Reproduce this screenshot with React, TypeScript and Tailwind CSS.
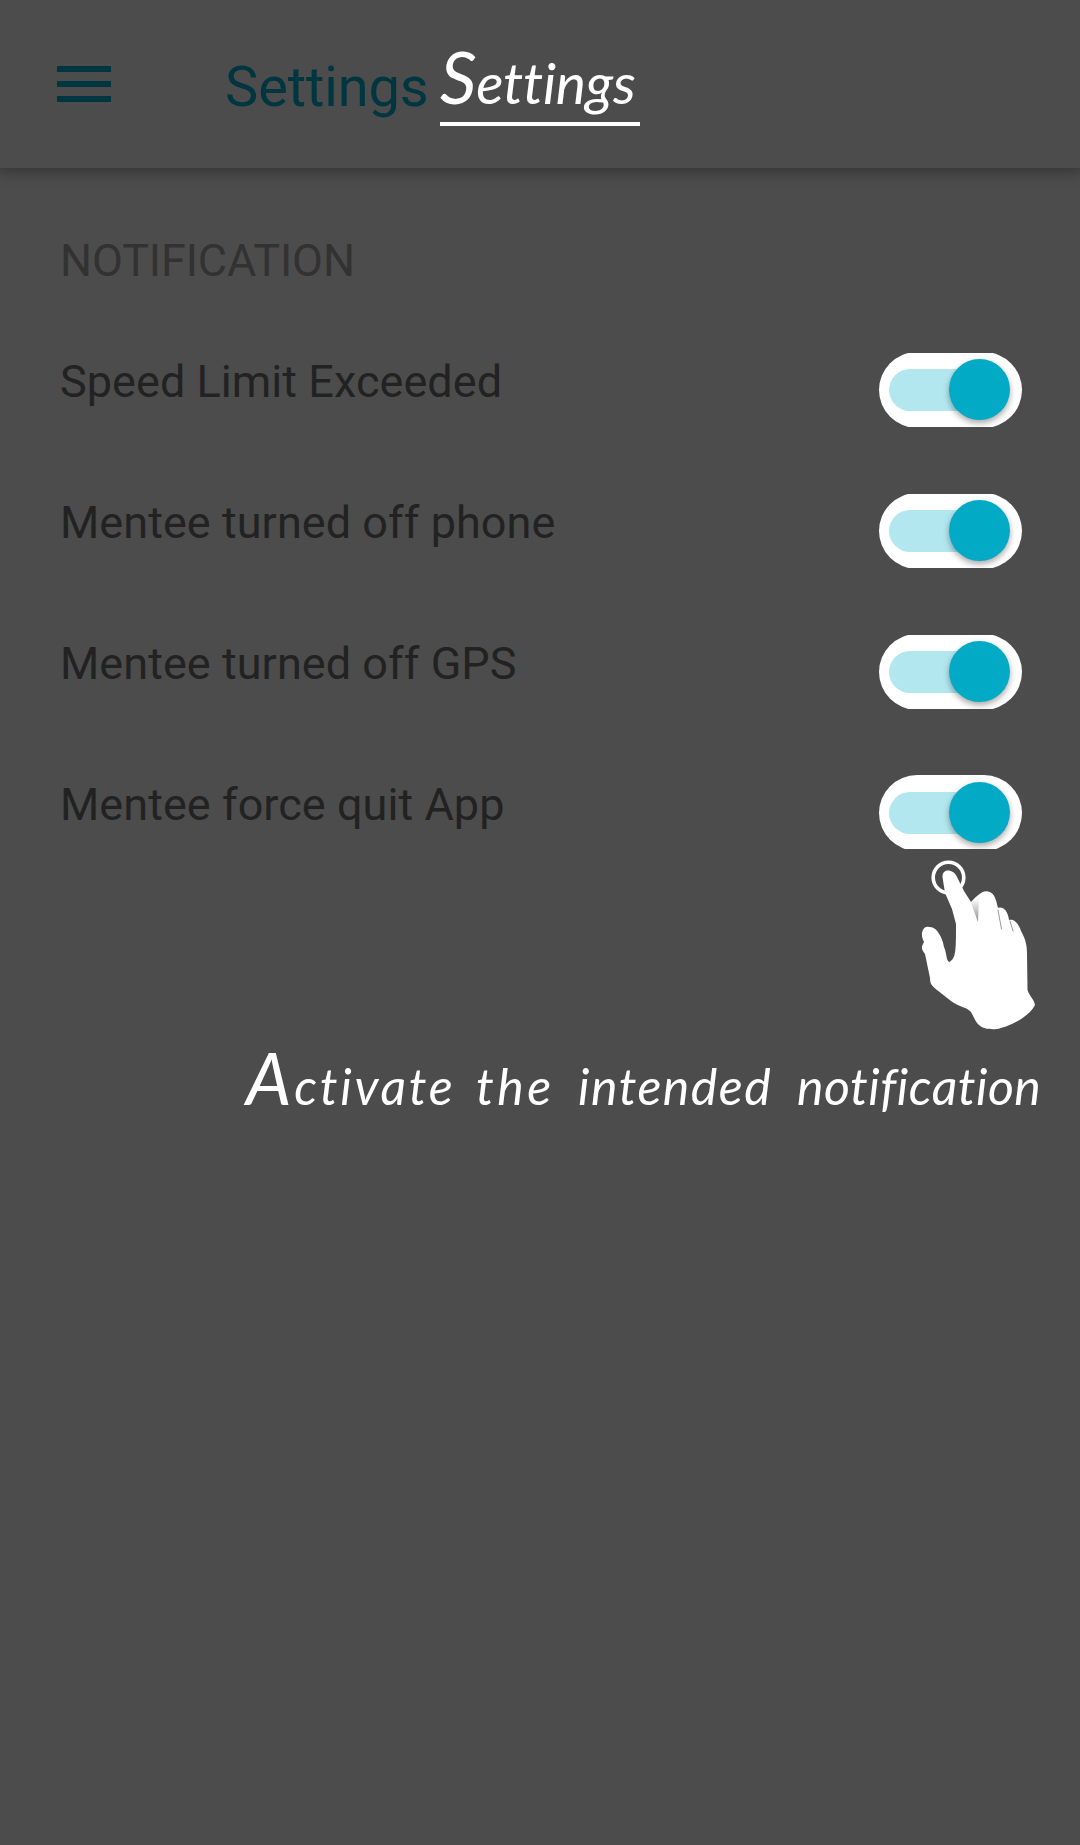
const items = [
  'Speed Limit Exceeded',
  'Mentee turned off phone',
  'Mentee turned off GPS',
  'Mentee force quit App',
];

function Toggle() {
  return (
    <span className="flex h-[76px] w-[143px] items-center rounded-[38px] bg-white pl-2.5 [clip-path:inset(1.5px_0_0.5px)] group-last:[clip-path:inset(0.5px_0_1.5px)]">
      <span className="relative block h-[42px] w-[110px] rounded-full bg-[#b3e7ef]">
        <span className="absolute -top-[9.5px] left-[60px] size-[61px] rounded-full bg-[#03aac6] shadow-[0_3px_6px_rgba(0,0,0,0.35)]" />
      </span>
    </span>
  );
}

function TapHand() {
  return (
    <svg className="h-[172px] w-[116px]" viewBox="0 0 116 172" aria-hidden="true">
      <defs>
        <linearGradient id="fold" x1="0" y1="0" x2="0" y2="1">
          <stop offset="0" stopColor="#fff" />
          <stop offset="1" stopColor="#888" />
        </linearGradient>
      </defs>
      <circle cx="28.5" cy="17.5" r="15.3" fill="none" stroke="#fff" strokeWidth="3.6" />
      <path
        fill="#fff"
        d="M22.5 17C22 8 34 9 37 17L44 31L51 42C56 37 62 30 68 31.500C75 33 76 40 78 48C83 46 88 51 89 60C95 58 99 65 101 71C106 80 107 86 107 94L107.500 130C110 137 114 139 115 145C109 158 85 168 77 169C55 171 56 158 50 151C46 147 39 147 31 141L17 130C12 126 10 124 10 118L5 94C0 88 2 86 4 82C-1 73 4 65 9 67C17 66 23 79 24 87C27 94 26 100 29 102C36 99 36 91 36 64L32 49L25 33Z"
      />
      <path fill="url(#fold)" d="M51 43Q55 39 59 39L58 62Z" />
      <path d="M78 50L81.500 69M90 61L93 71" fill="none" stroke="#999" strokeWidth="1" strokeLinecap="round" />
    </svg>
  );
}

export default function App() {
  return (
    <div className="flex h-[1845px] w-[1080px] flex-col overflow-hidden bg-[#4c4c4c] font-['Roboto',sans-serif]">
      <header className="flex h-[168px] shrink-0 items-start shadow-[0_3px_12px_2px_rgba(0,0,0,0.28)]">
        <div className="mt-[66px] ml-[57px] flex w-[54px] flex-col gap-[9px]">
          <span className="h-1.5 bg-[#00363f]" />
          <span className="h-1.5 bg-[#00363f]" />
          <span className="h-1.5 bg-[#00363f]" />
        </div>
        <h1 className="mt-[54px] ml-[114px] w-[215px] text-[56px] leading-[66px] tracking-[-0.1px] whitespace-nowrap text-[#00363f]">
          Settings
        </h1>
        <div className="mt-[34px] h-[92px] w-[200px] border-b-4 border-white font-['Lato',cursive] text-[57px] leading-[84px] tracking-[-0.3px] whitespace-nowrap text-white italic first-letter:text-[72px]">
          Settings
        </div>
      </header>

      <main className="flex flex-col">
        <h2 className="mt-[66px] ml-[60px] text-[45px] leading-[53px] tracking-[-0.15px] text-[#323232]">NOTIFICATION</h2>
        <ul className="mt-[32px]">
          {items.map((label) => (
            <li key={label} className="group flex h-[141px] items-center justify-between pr-[58px] pl-[60px]">
              <span className="-mt-[17px] text-[45px] leading-[53px] tracking-[0.05px] text-[#222]">{label}</span>
              <Toggle />
            </li>
          ))}
        </ul>
        <div className="-mt-[23px] ml-[920px]">
          <TapHand />
        </div>
        <p className="mt-[9px] ml-[246px] flex items-baseline font-['Lato',cursive] text-[50px] leading-[70px] whitespace-nowrap text-white italic">
          <span className="w-[230px] tracking-[2.8px]">
            <span className="text-[72px] leading-none">A</span>ctivate
          </span>
          <span className="w-[102px] tracking-[3.5px]">the</span>
          <span className="w-[219px] tracking-[1.5px]">intended</span>
          <span className="tracking-[0.5px]">notification</span>
        </p>
      </main>
    </div>
  );
}
